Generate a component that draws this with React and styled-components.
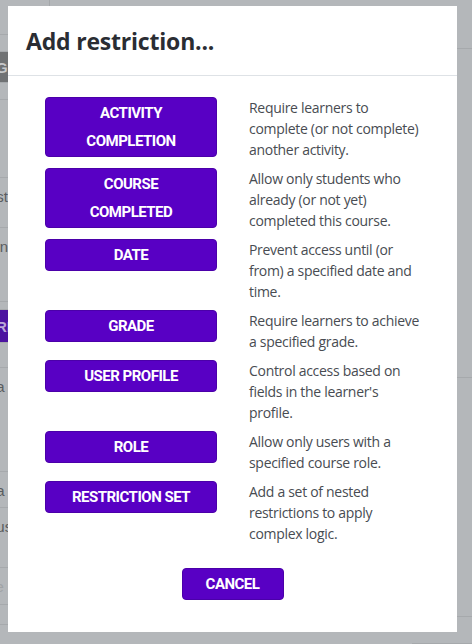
import styled, { createGlobalStyle } from 'styled-components';

const GlobalStyle = createGlobalStyle`
  html, body {
    margin: 0;
    padding: 0;
    background: #b4b7ba;
  }
  body {
    font-family: "Open Sans", "Liberation Sans", sans-serif;
    width: 472px;
    height: 644px;
    overflow: hidden;
  }
`;

const restrictions = [
  { label: ['ACTIVITY', 'COMPLETION'], text: ['Require learners to', 'complete (or not complete)', 'another activity.'] },
  { label: ['COURSE', 'COMPLETED'], text: ['Allow only students who', 'already (or not yet)', 'completed this course.'] },
  { label: ['DATE'], text: ['Prevent access until (or', 'from) a specified date and', 'time.'] },
  { label: ['GRADE'], text: ['Require learners to achieve', 'a specified grade.'] },
  { label: ['USER PROFILE'], text: ['Control access based on', "fields in the learner's", 'profile.'] },
  { label: ['ROLE'], text: ['Allow only users with a', 'specified course role.'] },
  { label: ['RESTRICTION SET'], text: ['Add a set of nested', 'restrictions to apply', 'complex logic.'] },
];

// page behind the backdrop: only its edges show
const leftRows = [
  { h: 35 }, { h: 17 }, { h: 31, tag: 'Gi', tone: 'gray' }, { h: 17 }, { h: 78 }, { h: 50, text: 'ost' },
  { h: 74, text: 'ion' }, { h: 8 }, { h: 33, tag: 'RI', tone: 'purple' }, { h: 25 }, { h: 104, text: 'ua' },
  { h: 36, text: 'da' }, { h: 60, text: 'ous' }, { h: 37, text: 'ite', faint: true }, { h: 20 },
];

const rightRows = [{ h: 49 }, { h: 329 }, { h: 239, text: 'm', at: 50 }, { h: 27 }];

const App = () => {
  return (
    <>
      <GlobalStyle />
      <Page>
        <EdgeColumn>
          {leftRows.map((r, i) => (
            <PageRow key={i} style={{ height: r.h }}>
              {r.tag && <Tag $tone={r.tone}>{r.tag}</Tag>}
              {r.text && <EdgeText $faint={r.faint}>{r.text}</EdgeText>}
            </PageRow>
          ))}
        </EdgeColumn>
        <TopRule />
        <EdgeColumn>
          {rightRows.map((r, i) => (
            <PageRow key={i} style={{ height: r.h }}>
              {r.text && <EdgeText $right style={{ marginTop: r.at }}>{r.text}</EdgeText>}
            </PageRow>
          ))}
        </EdgeColumn>
      </Page>

      <Modal>
        <Header>
          <Title>Add restriction...</Title>
        </Header>
        <Body>
          <List>
            {restrictions.map((r) => (
              <Item key={r.label.join(' ')}>
                <TypeButton>
                  {r.label.map((l) => (
                    <span key={l}>{l}</span>
                  ))}
                </TypeButton>
                <Description>
                  {r.text.map((t) => (
                    <Line key={t}>{t}</Line>
                  ))}
                </Description>
              </Item>
            ))}
          </List>
          <Footer>
            <CancelButton>CANCEL</CancelButton>
          </Footer>
        </Body>
      </Modal>
    </>
  );
};

const Page = styled.div`
  display: grid;
  grid-template-columns: 49px 1fr 60px;
  height: 644px;
  background: #b4b7ba;
`;

const EdgeColumn = styled.div`
  display: flex;
  flex-direction: column;
  overflow: hidden;
`;

const TopRule = styled.div`
  border-left: 1px solid #a4a7aa;
  height: 6px;
`;

const PageRow = styled.div`
  box-sizing: border-box;
  border-bottom: 1px solid #a6a9ac;
  display: flex;
  align-items: center;
  justify-content: flex-start;
  flex-shrink: 0;
`;

const Tag = styled.div`
  height: 100%;
  width: 40px;
  margin-left: -4px;
  display: flex;
  align-items: center;
  font-family: "Liberation Sans", sans-serif;
  font-weight: 700;
  font-size: 15px;
  color: ${(p) => (p.$tone === 'purple' ? '#b9a8d8' : '#c6c8ca')};
  background: ${(p) => (p.$tone === 'purple' ? '#4c14a0' : '#707274')};
`;

const EdgeText = styled.div`
  font-family: "Liberation Sans", sans-serif;
  font-size: 15px;
  color: ${(p) => (p.$faint ? '#a0a3a6' : '#5a5d60')};
  margin-left: ${(p) => (p.$right ? '5px' : '-12px')};
  align-self: flex-start;
  padding-top: 10px;
`;

const Modal = styled.div`
  position: absolute;
  left: 8px;
  top: 6px;
  width: 449px;
  height: 626px;
  box-sizing: border-box;
  background: #fff;
  display: flex;
  flex-direction: column;
`;

const Header = styled.div`
  height: 70px;
  box-sizing: border-box;
  padding: 0 18px;
  display: flex;
  align-items: center;
  border-bottom: 1px solid #dee2e6;
`;

const Title = styled.h2`
  margin: 0;
  font-family: "Open Sans", sans-serif;
  font-weight: 700;
  font-size: 23px;
  color: #2a2d33;
  letter-spacing: -0.2px;
`;

const Body = styled.div`
  padding: 21px 0 32px 37px;
  display: flex;
  flex-direction: column;
`;

const List = styled.div`
  display: flex;
  flex-direction: column;
  gap: 8px;
`;

const Item = styled.div`
  display: flex;
  align-items: flex-start;
  gap: 32px;
`;

const buttonBase = `
  box-sizing: border-box;
  background: #5800c4;
  border: 1px solid #4b00a9;
  border-radius: 4px;
  color: #fff;
  font-family: Roboto, "Liberation Sans", sans-serif;
  font-weight: 700;
  font-size: 15px;
  letter-spacing: -0.5px;
  line-height: 28px;
  display: flex;
  flex-direction: column;
  align-items: center;
  justify-content: center;
`;

const TypeButton = styled.div`
  ${buttonBase}
  width: 172px;
  flex-shrink: 0;
  padding: 1px 0;
`;

const Description = styled.div`
  width: 180px;
  font-family: "Open Sans", sans-serif;
  font-size: 14px;
  letter-spacing: -0.3px;
  line-height: 21px;
  color: #484c52;
`;

const Line = styled.div`
  white-space: nowrap;
`;

const Footer = styled.div`
  display: flex;
  justify-content: center;
  padding-top: 24px;
  margin-left: -37px;
`;

const CancelButton = styled.div`
  ${buttonBase}
  width: 102px;
  height: 32px;
`;

export default App;
